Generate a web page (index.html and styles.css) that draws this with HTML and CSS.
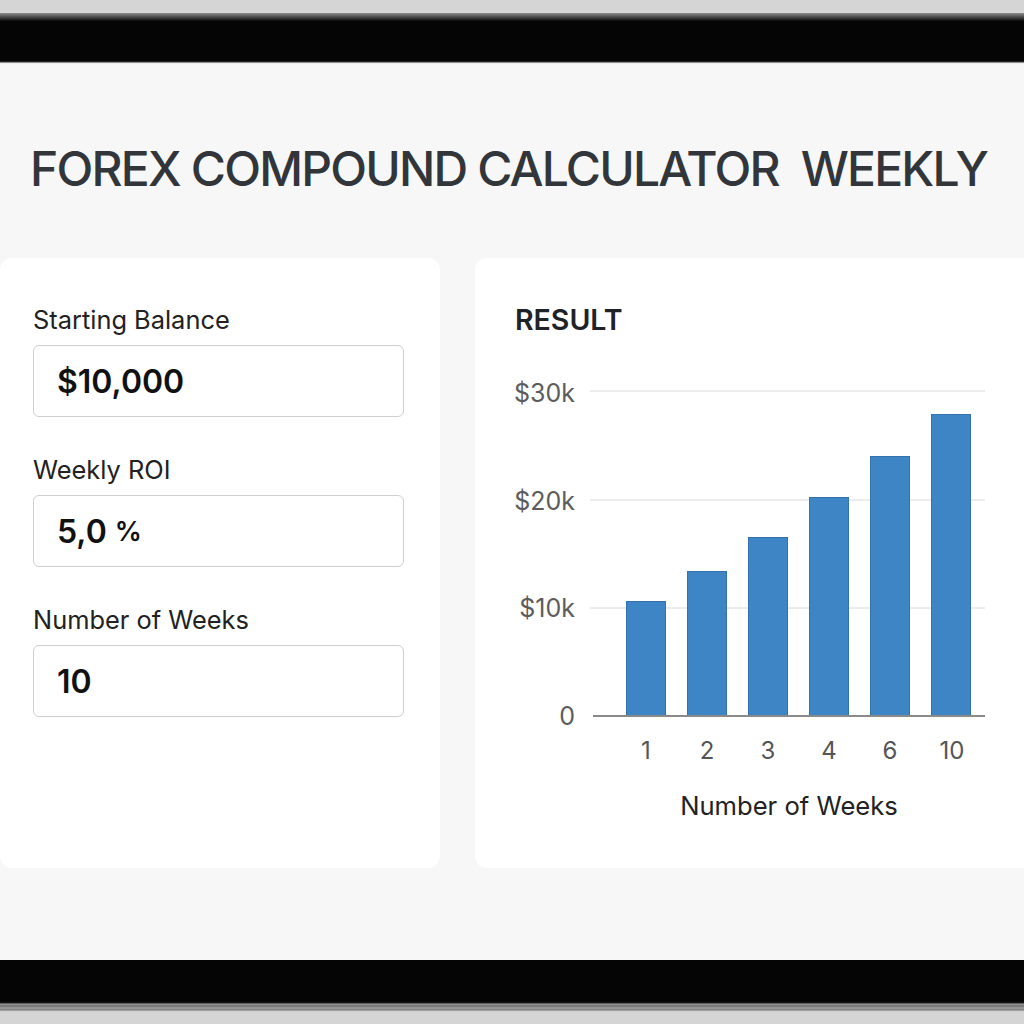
FILE: index.html
```html
<!DOCTYPE html>
<html lang="en">
<head>
<meta charset="utf-8">
<title>Forex Compound Calculator Weekly</title>
<link rel="stylesheet" href="styles.css">
</head>
<body>
<div class="device">
  <div class="bezel bezel-top"></div>
  <main class="screen">
    <h1 class="title">FOREX COMPOUND CALCULATOR&nbsp; WEEKLY</h1>
    <div class="panels">
      <section class="card inputs">
        <div class="field">
          <label class="field-label">Starting Balance</label>
          <div class="field-input">$10,000</div>
        </div>
        <div class="field">
          <label class="field-label">Weekly ROI</label>
          <div class="field-input">5,0&nbsp;<span class="unit">%</span></div>
        </div>
        <div class="field">
          <label class="field-label">Number of Weeks</label>
          <div class="field-input">10</div>
        </div>
      </section>
      <section class="card result">
        <h2 class="result-title">RESULT</h2>
        <svg class="chart" width="549" height="470" viewBox="0 0 549 470">
          <g class="grid">
            <line x1="115" y1="31" x2="510" y2="31"/>
            <line x1="115" y1="140" x2="510" y2="140"/>
            <line x1="115" y1="248" x2="510" y2="248"/>
          </g>
          <g class="y-labels">
            <text x="100" y="42">$30k</text>
            <text x="100" y="150">$20k</text>
            <text x="100" y="257">$10k</text>
            <text x="100" y="365">0</text>
          </g>
          <g class="bars">
            <rect x="151.5" y="241.5" width="39" height="115"/>
            <rect x="212.5" y="211.5" width="39" height="145"/>
            <rect x="273.5" y="177.5" width="39" height="179"/>
            <rect x="334.5" y="137.5" width="39" height="219"/>
            <rect x="395.5" y="96.5" width="39" height="260"/>
            <rect x="456.5" y="54.5" width="39" height="302"/>
          </g>
          <line class="axis" x1="118" y1="356" x2="510" y2="356"/>
          <g class="x-labels">
            <text x="171" y="399">1</text>
            <text x="232" y="399">2</text>
            <text x="293" y="399">3</text>
            <text x="354" y="399">4</text>
            <text x="415" y="399">6</text>
            <text x="477" y="399">10</text>
          </g>
          <text class="x-title" x="314" y="455">Number of Weeks</text>
        </svg>
      </section>
    </div>
  </main>
  <div class="bezel bezel-bottom"></div>
</div>
</body>
</html>
```

FILE: styles.css
```css
* {
  box-sizing: border-box;
}

html, body {
  margin: 0;
  padding: 0;
}

body {
  width: 1024px;
  height: 1024px;
  overflow: hidden;
  background: #d5d5d5;
  font-family: Inter, "Noto Sans", "Liberation Sans", sans-serif;
}

.device {
  display: flex;
  flex-direction: column;
  height: 1024px;
}

/* Dark device edges above and below the screen */
.bezel {
  flex: none;
}

.bezel-top {
  height: 64px;
  background: linear-gradient(to bottom,
    #d5d5d5 0, #d5d5d5 13px,
    #8c8c8c 13px, #4a4a4a 17px, #1c1c1c 20px,
    #050505 21px, #050505 61px,
    #3a3a3a 62px, #e8e8e8 63px, #f3f3f3 64px);
}

.bezel-bottom {
  height: 64px;
  background: linear-gradient(to bottom,
    #050505 0, #050505 42px,
    #262626 43px, #9a9a9a 44px, #6f6f6f 46px, #a0a0a0 48px, #7a7a7a 50px,
    #c8c8c8 51px, #d5d5d5 52px, #d5d5d5 64px);
}

.screen {
  flex: none;
  height: 896px;
  background: #f7f7f7;
  padding-top: 76px;
  overflow: hidden;
}

.title {
  margin: 0 0 0 30px;
  font-size: 48px;
  line-height: 58px;
  font-weight: 500;
  letter-spacing: -1.8px;
  color: #32363b;
  white-space: nowrap;
}

.panels {
  display: flex;
  gap: 35px;
  margin-top: 60px;
}

.card {
  flex: none;
  height: 610px;
  background: #ffffff;
  border-radius: 12px;
}

/* Left column: the input form */
.inputs {
  width: 440px;
  padding: 46px 36px 0 33px;
  display: flex;
  flex-direction: column;
  gap: 37px;
}

.field {
  display: flex;
  flex-direction: column;
  gap: 9px;
}

.field-label {
  font-size: 25.4px;
  line-height: 32px;
  font-weight: 400;
  color: #222;
}

.field-input {
  height: 72px;
  width: 371px;
  display: flex;
  align-items: center;
  padding-left: 23px;
  border: 1.5px solid #cfcfcf;
  border-radius: 6px;
  font-size: 32px;
  font-weight: 600;
  letter-spacing: 0;
  color: #111;
}

.unit {
  font-size: 27px;
}

/* Right column: the result chart */
.result {
  width: 560px;
  padding: 45px 0 0 0;
}

.result-title {
  margin: 0 0 0 40px;
  font-size: 28.5px;
  line-height: 34px;
  font-weight: 600;
  color: #1f2328;
}

.chart {
  display: block;
  margin-top: 23px;
  font-family: Inter, "Noto Sans", "Liberation Sans", sans-serif;
}

.grid line {
  stroke: #dadada;
  stroke-width: 1;
}

.axis {
  stroke: #8a8a8a;
  stroke-width: 2;
}

.bars rect {
  fill: #3d85c4;
  stroke: #3472ad;
  stroke-width: 1;
}

.y-labels text {
  text-anchor: end;
  font-size: 25px;
  fill: #5c5c5c;
}

.x-labels text {
  text-anchor: middle;
  font-size: 24px;
  fill: #555;
}

.x-title {
  text-anchor: middle;
  font-size: 25.6px;
  fill: #222;
}
```
